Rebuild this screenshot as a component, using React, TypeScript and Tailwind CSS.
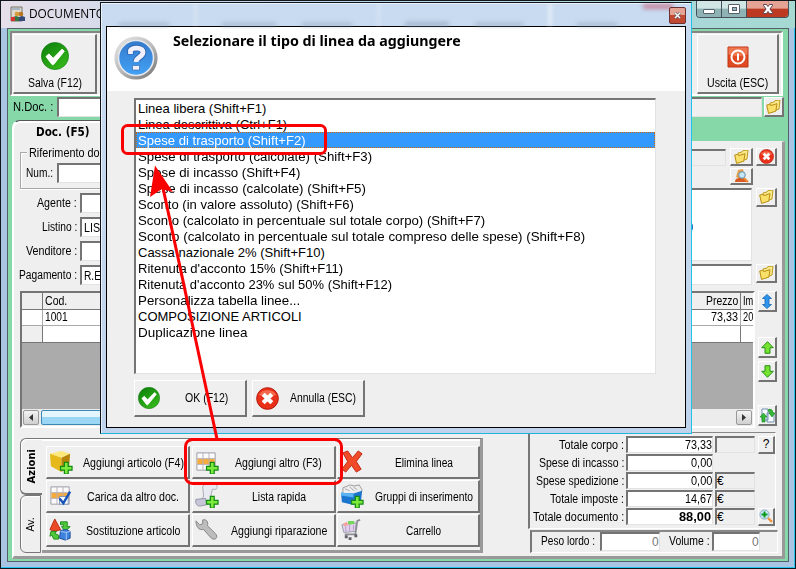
import { useLayoutEffect, useRef, type ReactNode } from "react";
import clsx from "clsx";

// Text squeezed or stretched to a given width, like a bitmap font
function Txt({ w, children, className }: { w: number; children: string; className?: string }) {
  const ref = useRef<HTMLSpanElement>(null);
  useLayoutEffect(() => {
    const el = ref.current;
    if (el) el.style.transform = `scaleX(${w / el.offsetWidth})`;
  }, [w, children]);
  return (
    <span className={clsx("inline-block shrink-0 whitespace-nowrap text-left", className)} style={{ width: w }}>
      <span ref={ref} className="inline-block origin-left">
        {children}
      </span>
    </span>
  );
}

const raised = "border-t border-l border-r-2 border-b-2 border-t-white border-l-white border-r-[#747474] border-b-[#747474] bg-[#efefef]";
const sunken = "border-t-2 border-l-2 border-r border-b border-t-[#747474] border-l-[#747474] border-r-[#e2e2e2] border-b-[#e2e2e2]";

function Plus() {
  return <path d="M16 13h4v4h4v4h-4v4h-4v-4h-4v-4h4z" fill="#7bea3a" stroke="#168a16" strokeWidth="1.3" />;
}

function Check({ size }: { size: number }) {
  return (
    <svg width={size} height={size} viewBox="0 0 28 28">
      <defs>
        <linearGradient id="green" x1="0" y1="0" x2="0.7" y2="1">
          <stop offset="0" stopColor="#0b7d0b" />
          <stop offset="1" stopColor="#35b81a" />
        </linearGradient>
      </defs>
      <circle cx="14" cy="14" r="13.6" fill="url(#green)" stroke="#0c720c" strokeWidth="0.6" />
      <path d="M5 14.5l3-2.6 4.2 4.4 9-9.2 2 2.3-10.4 12.8c-.7.8-1.5.7-2 0z" fill="#fff" stroke="#fff" strokeWidth="1" />
    </svg>
  );
}

function RedCross({ size }: { size: number }) {
  return (
    <svg width={size} height={size} viewBox="0 0 24 24">
      <circle cx="12" cy="12" r="11.3" fill="#e93018" stroke="#b4180a" />
      <path d="M3 8a10 8 0 0 1 18 0q-9 5-18 0" fill="#f56a4d" />
      <path d="M7.5 7.5l9 9M16.5 7.5l-9 9" stroke="#fff" strokeWidth="4.4" />
    </svg>
  );
}

function Folder() {
  return (
    <svg width="15" height="14" viewBox="0 0 15 14">
      <path d="M4 3l4-1 1-1.5 5-.5-1 9-8 3z" fill="#f7e98c" stroke="#c39a1c" />
      <path d="M.7 5l3-.6L5 5.5l6-1.8-1.2 7.5L2.5 13.4z" fill="#f8e06a" stroke="#b98d10" />
    </svg>
  );
}

function Help() {
  return (
    <svg width="44" height="44" viewBox="0 0 44 44">
      <defs>
        <linearGradient id="ring" x1="0.1" y1="0" x2="0.9" y2="1">
          <stop offset="0" stopColor="#e6e6e6" />
          <stop offset="0.5" stopColor="#bcbcbc" />
          <stop offset="1" stopColor="#747474" />
        </linearGradient>
        <linearGradient id="blue" x1="0" y1="0" x2="0" y2="1">
          <stop offset="0" stopColor="#3479cc" />
          <stop offset="1" stopColor="#42a2f4" />
        </linearGradient>
      </defs>
      <circle cx="22" cy="22" r="21.6" fill="url(#ring)" />
      <circle cx="22" cy="22" r="17.5" fill="url(#blue)" stroke="#e2e6ec" strokeWidth="1.6" />
      <path d="M16.500 18.500v-4c2-3.500 12.500-3.500 12.500 2 0 4.500-7 4.500-7 9.500" fill="none" stroke="#2a61b0" strokeWidth="6.500" />
      <path d="M16.500 18v-3.500c2-3.500 12.500-3.500 12.500 2 0 4.500-7 4.500-7 9.500" fill="none" stroke="#f0f0fc" strokeWidth="4.800" />
      <path d="M18.500 29.500h7v4.500h-7z" fill="#f0f0fc" stroke="#2a61b0" strokeWidth="0.6" />
    </svg>
  );
}

function TableBase() {
  return (
    <>
      <path d="M2 3h19v18H2z" fill="#fbfbfd" stroke="#9a9aa6" />
      <path d="M2.500 9h18v6h-18z" fill="#f7ab3c" />
      <path d="M2 9h19M2 15h19M8.300 3v18M14.600 3v18" stroke="#b9b2b8" />
    </>
  );
}

const actionIcons: Record<string, ReactNode> = {
  box: (
    <>
      <path d="M1 4l12-3 9 3-9 4z" fill="#fce77a" />
      <path d="M1 4l12 4v15L2 17z" fill="#e6b91a" />
      <path d="M13 8l9-4-1 13-8 6z" fill="#b58307" />
      <Plus />
    </>
  ),
  table: (
    <>
      <TableBase />
      <Plus />
    </>
  ),
  delete: <path d="M3 3l5-2 5 7 6-7 4 3-6 8 5 8-5 3-5-7-6 7-4-3 6-8z" fill="#f04a28" stroke="#c02710" />,
  tableCheck: (
    <>
      <TableBase />
      <path d="M11 13h9v8h-9z" fill="#fff" stroke="#7d91b8" />
      <path d="M11 15l4 5 7-12" fill="none" stroke="#1553b8" strokeWidth="2.500" />
    </>
  ),
  scroll: (
    <>
      <path d="M8 3c0-2 2-2.500 4-2.500h9c2 0 3 3 1 5h-4l-3 14H5l4-7z" fill="#e9e9f2" stroke="#a9a9b8" />
      <path d="M1 16c-1 4 1 7 4 7l10-2c-3-1-4-3-4-6z" fill="#c6c6d8" stroke="#9393a6" />
      <Plus />
    </>
  ),
  group: (
    <>
      <path d="M3 10V4l5-2 2-1 5 1 5-1 3 5-2 8H4z" fill="#ededf0" stroke="#9b9b9b" />
      <path d="M5 5l5 2M10 3l5 4M14 3l4 3" stroke="#aaa" />
      <path d="M1 9l13 1 9-3-1 10-8 5-12-3z" fill="#1b75cf" />
      <path d="M1 9l13 1v4L1 12z" fill="#57b3f1" />
      <Plus />
    </>
  ),
  swap: (
    <>
      <path d="M6 1l6 11c-3 2-8 2-11 0z" fill="#ea4a26" stroke="#b72c10" />
      <path d="M12 4h7v5h3l-5 5-4-5h2V7h-3z" fill="#4fc83a" stroke="#1c8a1c" />
      <path d="M2 14h6l-2 2 4 2v4H5l-2-4-2 1z" fill="#4fc83a" stroke="#1c8a1c" />
      <path d="M12 13l6-1 4 2v7l-5 2-6-2z" fill="#3d83dd" stroke="#1d4d9c" />
      <path d="M12 14l6 1 4-1M18 15v8" stroke="#a5cdfa" fill="none" />
    </>
  ),
  wrench: (
    <path
      d="M1 3l4 4 3-1 0-4c4-1 6 2 5 6l8 8c4 4 0 8-4 5l-8-9c-5 1-8-3-8-9z"
      fill="#bdbdbd"
      stroke="#848484"
    />
  ),
  cart: (
    <>
      <path d="M2 7l15-2-1 9-12 1z" fill="#dcd4ee" stroke="#9c9cab" />
      <path d="M6 8v6M10 7v7M14 7v6" stroke="#c793c5" />
      <path d="M8 3h7v3l-6 1z" fill="#73d85a" />
      <path d="M3 6l4-2 2 3-4 2z" fill="#f5a5a0" />
      <path d="M21 2l-3 1-2 14H5" fill="none" stroke="#8c8c93" strokeWidth="1.800" />
      <path d="M5 18h3v3H5zM15 17h3v3h-3zM9 20h3v3H9z" fill="#606068" />
    </>
  ),
};

const actions = [
  { icon: "box", label: "Aggiungi articolo (F4)", w: 101 },
  { icon: "table", label: "Aggiungi altro (F3)", w: 87 },
  { icon: "delete", label: "Elimina linea", w: 58 },
  { icon: "tableCheck", label: "Carica da altro doc.", w: 92 },
  { icon: "scroll", label: "Lista rapida", w: 54 },
  { icon: "group", label: "Gruppi di inserimento", w: 98 },
  { icon: "swap", label: "Sostituzione articolo", w: 94 },
  { icon: "wrench", label: "Aggiungi riparazione", w: 96 },
  { icon: "cart", label: "Carrello", w: 35 },
];

const lines = [
  { label: "Linea libera (Shift+F1)", w: 128 },
  { label: "Linea descrittiva (Ctrl+F1)", w: 149 },
  { label: "Spese di trasporto (Shift+F2)", w: 168 },
  { label: "Spese di trasporto (calcolate) (Shift+F3)", w: 234 },
  { label: "Spese di incasso (Shift+F4)", w: 162 },
  { label: "Spese di incasso (calcolate) (Shift+F5)", w: 228 },
  { label: "Sconto (in valore assoluto) (Shift+F6)", w: 216 },
  { label: "Sconto (calcolato in percentuale sul totale corpo) (Shift+F7)", w: 347 },
  { label: "Sconto (calcolato in percentuale sul totale compreso delle spese) (Shift+F8)", w: 447 },
  { label: "Cassa nazionale 2% (Shift+F10)", w: 187 },
  { label: "Ritenuta d'acconto 15% (Shift+F11)", w: 205 },
  { label: "Ritenuta d'acconto 23% sul 50% (Shift+F12)", w: 254 },
  { label: "Personalizza tabella linee...", w: 162 },
  { label: "COMPOSIZIONE ARTICOLI", w: 164 },
  { label: "Duplicazione linea", w: 110 },
];

const totals = [
  { label: "Totale corpo :", w: 65, value: "73,33", vw: 27, cur: "" },
  { label: "Spese di incasso :", w: 85, value: "0,00", vw: 21, cur: null },
  { label: "Spese spedizione :", w: 88, value: "0,00", vw: 21, cur: "€" },
  { label: "Totale imposte :", w: 74, value: "14,67", vw: 27, cur: "€" },
  { label: "Totale documento :", w: 91, value: "88,00", vw: 32, cur: "€" },
];

const fields = [
  { label: "Agente :", w: 40, value: "", vw: 0 },
  { label: "Listino :", w: 35, value: "LIS", vw: 16 },
  { label: "Venditore :", w: 51, value: "", vw: 0 },
  { label: "Pagamento :", w: 58, value: "R.E", vw: 17 },
];

function SmallButton({ className, children }: { className?: string; children: ReactNode }) {
  return <button className={clsx(raised, "flex shrink-0 items-center justify-center", className)}>{children}</button>;
}

function TitleBar() {
  return (
    <header className="flex h-[28px] items-start bg-linear-to-r from-[#e5dfe8] via-[#b8d2ec] via-40% to-[#a5d9d2] pl-[9px]">
      <svg className="mt-1.5" width="15" height="16" viewBox="0 0 15 16">
        <path d="M1 1h11v14H1z" fill="#ded9ca" stroke="#77736b" />
        <path d="M2 3h8" stroke="#a7b8c4" strokeWidth="2" />
        <circle cx="7" cy="8" r="2.300" fill="#d89b38" />
        <circle cx="11" cy="8" r="2.300" fill="#b87622" />
        <path d="M3 15v-4l3-1 3 1v4z" fill="#317746" />
        <path d="M9 15v-4l3-1 3 1v4z" fill="#354879" />
        <path d="M1 11h4v4H1z" fill="#d6332a" />
      </svg>
      <Txt w={76} className="ml-[4px] mt-[5px] font-['Open_Sans',sans-serif] text-[12.500px] leading-[17px]">DOCUMENTO</Txt>
      <div className="ml-auto mr-[6px] mt-px flex h-[17px] overflow-hidden rounded-b border border-t-0 border-[#46515c]">
        <div className="flex w-[25px] items-center justify-center border-r border-[#46515c] bg-linear-to-b from-[#d2e5e5] from-45% to-[#8fb3b5] to-50%">
          <div className="mt-1 h-[5px] w-[12px] rounded-[1px] border border-[#56606c] bg-white" />
        </div>
        <div className="flex w-[25px] items-center justify-center border-r border-[#46515c] bg-linear-to-b from-[#d2e5e5] from-45% to-[#8fb3b5] to-50%">
          <div className="flex h-[10px] w-[12px] items-center justify-center rounded-[1px] border border-[#56606c] bg-white">
            <div className="h-1 w-[5px] border border-[#56606c] bg-[#9bbcbf]" />
          </div>
        </div>
        <div className="flex w-[41px] items-center justify-center bg-linear-to-b from-[#e4a394] from-45% to-[#bc3a22] to-50%">
          <svg width="12" height="10" viewBox="0 0 12 10">
            <path d="M1.500.5h3L6 2.500 7.500.5h3v1L8 5l2.500 3.500v1h-3L6 7.500 4.500 9.500h-3v-1L4 5 1.500 1.500z" fill="#fff" stroke="#5b4350" />
          </svg>
        </div>
      </div>
    </header>
  );
}

function Toolbar() {
  return (
    <div className="ml-[2px] flex h-[65px] w-[773px] justify-between border-2 border-t-[#868686] border-l-[#868686] border-r-white border-b-white bg-[#efefef] p-px">
      <button className={clsx(raised, "flex h-[60px] w-[84px] flex-col items-center justify-end pb-0.5")}>
        <Check size={28} />
        <Txt w={54} className="mt-1.5 leading-[14px]">Salva (F12)</Txt>
      </button>
      <button className={clsx(raised, "mr-px flex h-[60px] w-[82px] flex-col items-center justify-end pb-0.5")}>
        <svg width="22" height="22" viewBox="0 0 22 22">
          <path d="M1 1h20v20H1z" fill="#df4a22" stroke="#bd3513" />
          <path d="M1.500 1.500h19v7q-10 3-19 0z" fill="#ee7650" />
          <circle cx="11" cy="11" r="6.500" fill="none" stroke="#fff" strokeWidth="2" />
          <path d="M11 7.500v7" stroke="#fff" strokeWidth="2" />
        </svg>
        <Txt w={61} className="mt-[8px] leading-[14px]">Uscita (ESC)</Txt>
      </button>
    </div>
  );
}

function FormArea() {
  return (
    <div className="flex h-[149px] justify-between">
      <div className="w-[102px]">
        <div className="ml-1.5 mt-[10px] flex h-[37px] w-[100px] flex-col items-start border border-r-0 border-[#a8a8a8] shadow-[inset_1px_1px_0_#fff,0_1px_0_#fff]">
          <Txt w={76} className="-mt-[7px] ml-[6px] bg-[#efefef] pl-[2px] leading-[14px]">Riferimento doc</Txt>
          <div className="-mt-[2px] ml-[5px] flex items-center gap-[4px] self-stretch pt-[5px]">
            <Txt w={27}>Num.:</Txt>
            <div className={clsx(sunken, "h-[20px] flex-1 bg-white")} />
          </div>
        </div>
        <div className="mt-[4px] flex flex-col gap-[4px]">
          {fields.map((f) => (
            <div key={f.label} className="flex h-[20px] items-center">
              <span className="flex w-[65px] justify-end"><Txt w={f.w}>{f.label}</Txt></span>
              <div className={clsx(sunken, "ml-[3px] flex h-[20px] w-[36px] shrink-0 items-center bg-white pl-[2px]")}>
                {f.value && <Txt w={f.vw}>{f.value}</Txt>}
              </div>
            </div>
          ))}
        </div>
      </div>
      <div className="mr-[5px] mt-[6px] flex w-[100px] flex-col items-end">
        <div className="flex w-full">
          <div className={clsx(sunken, "mt-px h-[17px] w-[49px]")} />
          <SmallButton className="ml-1 h-[18px] w-[23px]"><Folder /></SmallButton>
          <SmallButton className="ml-[3px] h-[18px] w-[21px]"><RedCross size={15} /></SmallButton>
        </div>
        <SmallButton className="mr-[24px] mt-[2px] h-[17px] w-[23px]">
          <svg width="15" height="14" viewBox="0 0 15 14">
            <path d="M4 1l5-1 1 5-2 4H4L2 8z" fill="#e7a14a" />
            <path d="M1 13c0-4 3-4 6-4s6 1 6 4z" fill="#d95a1e" />
            <circle cx="8" cy="6" r="3.300" fill="#c4e8fa" stroke="#628cab" />
            <path d="M10 9l4 4" stroke="#ef8a35" strokeWidth="2" />
          </svg>
        </SmallButton>
        <div className="mt-[3px] flex w-full">
          <div className={clsx(sunken, "flex h-[73px] w-[75px] items-center bg-white pl-[8px]")}>
            <div className="mb-[-4px] h-2 w-1.5 rounded-full border-r-2 border-r-[#2374bd] bg-[#98633c]" />
          </div>
          <SmallButton className="ml-[4px] h-[19px] w-[21px]"><Folder /></SmallButton>
        </div>
        <div className="mt-[3px] flex w-full">
          <div className={clsx(sunken, "h-[21px] w-[75px] bg-white")} />
          <SmallButton className="ml-[4px] h-[19px] w-[21px]"><Folder /></SmallButton>
        </div>
      </div>
    </div>
  );
}

function ArticleGrid() {
  return (
    <div className="flex h-[137px] justify-between pl-1.5 pr-[5px]">
      <div className="flex w-[735px] flex-col border-2 border-t-[#747474] border-l-[#747474] border-r-white border-b-white bg-[#ababab]">
        <table className="w-full table-fixed border-collapse leading-[14px]">
          <colgroup>
            <col className="w-[20px]" />
            <col />
            <col className="w-[60px]" />
            <col className="w-[13px]" />
          </colgroup>
          <tbody>
            <tr className="h-[16px] bg-[#efefef]">
              <td className="border-r border-b border-[#777] p-0" />
              <td className="border-b border-[#777] py-0 pl-[2px]"><Txt w={22} className="align-top">Cod.</Txt></td>
              <td className="border-r border-b border-[#777] py-0 pr-[2px] text-right"><Txt w={32} className="align-top">Prezzo</Txt></td>
              <td className="border-b border-[#777] py-0 pl-[2px]"><Txt w={10} className="align-top">Im</Txt></td>
            </tr>
            <tr className="h-[16px] bg-white">
              <td className="border-r border-b border-[#aaa] p-0" />
              <td className="border-b border-[#aaa] py-0 pl-[2px]"><Txt w={23} className="align-top">1001</Txt></td>
              <td className="border-r border-b border-[#aaa] py-0 pr-[2px] text-right"><Txt w={27} className="align-top">73,33</Txt></td>
              <td className="border-b border-[#aaa] py-0 pl-[2px]"><Txt w={10} className="align-top">20</Txt></td>
            </tr>
            <tr className="h-[17px] bg-white">
              <td className="border-r border-b border-[#777] bg-[#efefef] p-0" />
              <td className="border-b border-[#777] p-0" />
              <td className="border-r border-b border-[#777] p-0" />
              <td className="border-b border-[#777] p-0" />
            </tr>
          </tbody>
        </table>
        <div className="mt-auto flex h-[17px] justify-between bg-[#ececec] p-px">
          <div className="flex w-[16px] items-center justify-center rounded-[2px] border border-[#999] bg-linear-to-b from-[#f4f4f4] to-[#cfcfcf]">
            <svg width="4" height="7" viewBox="0 0 4 7"><path d="M4 0v7L0 3.500z" fill="#333" /></svg>
          </div>
          <div className="ml-[2px] mr-auto w-[300px] rounded-[2px] border border-[#3c88b5] bg-linear-to-b from-[#e4f5fd] from-45% to-[#9bd6f5] to-50%" />
          <div className="flex w-[16px] items-center justify-center rounded-[2px] border border-[#999] bg-linear-to-b from-[#f4f4f4] to-[#cfcfcf]">
            <svg width="4" height="7" viewBox="0 0 4 7"><path d="M0 0v7l4-3.500z" fill="#333" /></svg>
          </div>
        </div>
      </div>
      <div className="flex w-[19px] flex-col">
        <SmallButton className="h-[21px]">
          <svg width="10" height="15" viewBox="0 0 10 15">
            <path d="M5 .5l4.500 4H7v6h2.500l-4.500 4-4.500-4H3v-6H.5z" fill="#2f95ea" stroke="#1568b8" strokeWidth="0.8" />
          </svg>
        </SmallButton>
        <SmallButton className="mt-[25px] h-[21px]">
          <svg width="13" height="13" viewBox="0 0 13 13">
            <path d="M6.500.7l5.800 6H9v5.600H4V6.700H.7z" fill="#75e32f" stroke="#278e18" />
          </svg>
        </SmallButton>
        <SmallButton className="mt-[3px] h-[21px]">
          <svg width="13" height="13" viewBox="0 0 13 13">
            <path d="M6.500 12.300l5.800-6H9V.7H4v5.600H.7z" fill="#75e32f" stroke="#278e18" />
          </svg>
        </SmallButton>
        <SmallButton className="mt-[23px] h-[21px]">
          <svg width="15" height="15" viewBox="0 0 15 15">
            <path d="M2 1h6v11H2zM7 5h7v9H7z" fill="#f7faff" stroke="#7190b4" />
            <path d="M3.500 5L7 9H5v5H2V9H0zM9 1q4 0 4 4h2l-3 4-3-4h1q0-2-2-2z" fill="#36b936" stroke="#16851b" strokeWidth="0.6" />
          </svg>
        </SmallButton>
      </div>
    </div>
  );
}

function ActionsPanel() {
  return (
    <div className="mt-[10px] flex h-[115px] w-[463px]">
      <div className="flex w-[22px] flex-col">
        <div className="flex h-[57px] items-center justify-center rounded-l-md border border-r-0 border-[#777] border-b-2 shadow-[inset_1px_1px_0_#fff]">
          <span className="rotate-180 font-['DejaVu_Sans',sans-serif] text-[10px] font-bold [writing-mode:vertical-rl]">Azioni</span>
        </div>
        <div className="mr-px flex flex-1 items-center justify-center rounded-l-md border border-[#777] shadow-[inset_1px_1px_0_#fff]">
          <span className="rotate-180 font-['DejaVu_Sans',sans-serif] text-[10px] [writing-mode:vertical-rl]">Av.</span>
        </div>
      </div>
      <div className="flex-1 border-t border-r-[3px] border-b-[3px] border-t-[#777] border-r-[#999] border-b-[#999] pl-[4px] pt-[1px] shadow-[inset_0_2px_0_#fff]">
        <div className="mt-[6px] grid grid-cols-[144px_144px_143px] gap-x-[1.500px] gap-y-px">
          {actions.map((a) => (
            <button key={a.label} className={clsx(raised, "flex h-[33px] items-center pl-[2px]")}>
              <svg className="mb-px shrink-0" width="24" height="24" viewBox="0 0 25 25">
                {actionIcons[a.icon]}
              </svg>
              <span className="ml-[5px] mt-px flex flex-1 justify-center"><Txt w={a.w}>{a.label}</Txt></span>
            </button>
          ))}
        </div>
      </div>
    </div>
  );
}

function Totals() {
  return (
    <div className="mr-[4px] mt-[4px] w-[250px]">
      <div className="flex h-[97px] w-[248px] flex-col gap-px border-t border-l-2 border-r border-b border-t-[#888] border-l-[#777] border-r-white border-b-white pt-[3px]">
        {totals.map((t, i) => (
          <div key={t.label} className="flex h-[17px] shrink-0 items-center">
            <div className="flex w-[94px] shrink-0 justify-end"><Txt w={t.w}>{t.label}</Txt></div>
            <div className={clsx(sunken, "ml-[2px] flex h-[17px] w-[87px] shrink-0 items-center justify-end bg-white")}>
              <Txt w={t.vw} className={clsx(i === 4 && "mr-px font-bold")}>{t.value}</Txt>
            </div>
            {t.cur !== null && (
              <div className={clsx(sunken, "ml-[2px] flex h-[17px] w-[40px] shrink-0 items-center")}>
                {t.cur && <Txt w={7}>{t.cur}</Txt>}
              </div>
            )}
            {i === 0 && <SmallButton className="ml-[3px] h-[18px] w-[17px]">?</SmallButton>}
            {i === 4 && (
              <SmallButton className="ml-[3px] h-[18px] w-[17px]">
                <svg width="14" height="14" viewBox="0 0 14 14">
                  <circle cx="5.500" cy="5.500" r="4.600" fill="#c9e7f7" stroke="#86aac4" />
                  <path d="M5.500 2.500v6M2.500 5.500h6" stroke="#0a9a1a" strokeWidth="2" />
                  <path d="M9 9l4 4" stroke="#ee9339" strokeWidth="2.400" />
                </svg>
              </SmallButton>
            )}
          </div>
        ))}
      </div>
      <div className="ml-[2px] mt-px flex h-[23px] items-start border-t-2 border-l-2 border-r border-b border-t-[#888] border-l-[#777] border-r-white border-b-white pl-[9px]">
        <Txt w={54} className="mt-[2px]">Peso lordo :</Txt>
        <div className={clsx(sunken, "ml-[5px] flex h-[19px] w-[60px] items-center justify-end bg-white text-[#777]")}><Txt w={7}>0</Txt></div>
        <Txt w={41} className="ml-[9px] mt-[2px]">Volume :</Txt>
        <div className={clsx(sunken, "ml-[2px] flex h-[19px] w-[48px] items-center justify-end bg-white text-[#777]")}><Txt w={7}>0</Txt></div>
      </div>
    </div>
  );
}

function LineDialog() {
  return (
    <section className="absolute left-[99px] top-[1px] flex h-[432px] w-[592px] flex-col overflow-hidden border border-[#10161c] border-r-[#20c4e8] border-b-[#20b4d8] bg-linear-to-b from-[#c8dbf0] to-[#bfd4ec] px-[5px] pb-[5px] shadow-[inset_1px_1px_0_#eaf3fc]">
      <div className="relative flex h-[23px] shrink-0 justify-end">
        {/* shapes of the window behind, seen through the glass */}
        <div className="absolute inset-0 blur-[2px]">
          <div className="flex h-full items-end justify-around">
            <span className="h-[3px] w-[50px] bg-[#8799b2]/60" />
            <span className="h-full w-px bg-white" />
            <span className="h-[3px] w-[54px] bg-[#8799b2]/60" />
            <span className="h-[3px] w-[50px] bg-[#8799b2]/60" />
            <span className="h-full w-px bg-white" />
            <span className="h-[4px] w-[44px] bg-[#8799b2]/60" />
            <span className="h-[3px] w-[48px] bg-[#8799b2]/60" />
            <span className="h-full w-[2px] bg-white" />
            <span className="h-[3px] w-[40px] bg-[#8799b2]/60" />
            <span className="mb-[17px] h-[5px] w-[30px] bg-[#c84f6b]/60" />
          </div>
        </div>
        <div className="relative mt-[4px] flex h-[17px] w-[17px] items-center justify-center rounded-[2px] border border-[#6d3030] bg-linear-to-b from-[#e4a394] from-45% to-[#c24a32] to-50%">
          <svg width="7" height="7" viewBox="0 0 7 7">
            <path d="M1 1l5 5M6 1L1 6" stroke="#555" strokeWidth="2.600" />
            <path d="M1 1l5 5M6 1L1 6" stroke="#fff" strokeWidth="1.500" />
          </svg>
        </div>
      </div>
      <div className="flex min-h-0 flex-1 flex-col border border-black bg-[#efefef]">
        <div className="flex h-[64px] shrink-0 bg-white">
          <div className="ml-[7px] mt-[9px]"><Help /></div>
          <Txt w={288} className="ml-[15px] mt-[6px] font-['Noto_Sans',sans-serif] text-[14px] font-bold leading-[16px]">Selezionare il tipo di linea da aggiungere</Txt>
        </div>
        <div className={clsx(sunken, "ml-[27px] mt-[7px] h-[276px] w-[522px] shrink-0 overflow-hidden bg-white")}>
          {lines.map((l, i) => (
            <div
              key={l.label}
              className={clsx(
                "flex h-[16px] items-center border border-dotted pl-px pt-px text-[13px] leading-[16px]",
                i === 2 ? "border-[#cc6600] bg-[#3399ff] text-white" : "border-transparent",
              )}
            >
              <Txt w={l.w} className="mt-px">{l.label}</Txt>
            </div>
          ))}
        </div>
        <div className="ml-[27px] mt-[6px] flex gap-[4px]">
          <button className={clsx(raised, "flex h-[37px] w-[113px] items-center pl-[3px]")}>
            <Check size={22} />
            <span className="flex flex-1 justify-center pl-[7px]"><Txt w={43}>OK (F12)</Txt></span>
          </button>
          <button className={clsx(raised, "ml-px flex h-[37px] w-[113px] items-center pl-[3px]")}>
            <RedCross size={23} />
            <span className="flex flex-1 justify-center pl-[3px]"><Txt w={66}>Annulla (ESC)</Txt></span>
          </button>
        </div>
      </div>
    </section>
  );
}

function Annotations() {
  return (
    <svg className="pointer-events-none absolute -left-px -top-px" width="796" height="569" viewBox="0 0 796 569">
      <g fill="none" stroke="#fb0000" strokeWidth="3">
        <rect x="122.500" y="125.500" width="203" height="28" rx="5" />
        <rect x="185.500" y="439.500" width="156" height="44" rx="7" />
        <path d="M163 188l54 251" />
      </g>
      <path d="M155 165.500l18 26.500-11-3-12 8z" fill="#fb0000" />
    </svg>
  );
}

export default function App() {
  return (
    <main className="relative flex h-[569px] w-[796px] flex-col overflow-hidden border border-[#12171c] bg-[#a9c5e1] font-['Liberation_Sans',Arial,sans-serif] text-[12px] leading-[14px] text-black shadow-[inset_-1px_-1px_0_#23c4f0]">
      <div className="-mt-px">
        <TitleBar />
      </div>
      <div className="mx-[6px] flex h-[534px] w-[782px] flex-col border border-[#54616c] bg-[#87d8a9]">
        <div className="h-[2px] shrink-0" />
        <Toolbar />
        <div className="ml-[5px] mt-px flex h-[20px] items-center">
          <Txt w={40}>N.Doc. :</Txt>
          <div className={clsx(sunken, "ml-1 h-[20px] w-[500px] bg-white")} />
          <div className={clsx(sunken, "h-[20px] w-[205px] bg-[#efefef]")} />
          <SmallButton className="ml-[2px] h-[20px] w-[20px]"><Folder /></SmallButton>
        </div>
        <div className="ml-[4px] mt-[3px] h-[21px] w-[100px] rounded-tl-lg border-t border-l-2 border-t-[#555] border-l-white bg-[#efefef] pl-[22px] pt-[4px] shadow-[inset_0_2px_0_#fff]">
          <Txt w={54} className="font-['DejaVu_Sans',sans-serif] text-[12px] font-bold leading-[15px]">Doc. (F5)</Txt>
        </div>
        <div className="ml-[4px] h-[418px] w-[773px] border-l-2 border-r-[3px] border-b-[3px] border-t border-l-white border-r-[#999] border-b-[#999] border-t-[#efefef] bg-[#efefef]">
          <FormArea />
          <ArticleGrid />
          <div className="flex justify-between pl-[6px]">
            <ActionsPanel />
            <Totals />
          </div>
        </div>
      </div>
      <LineDialog />
      <Annotations />
    </main>
  );
}
